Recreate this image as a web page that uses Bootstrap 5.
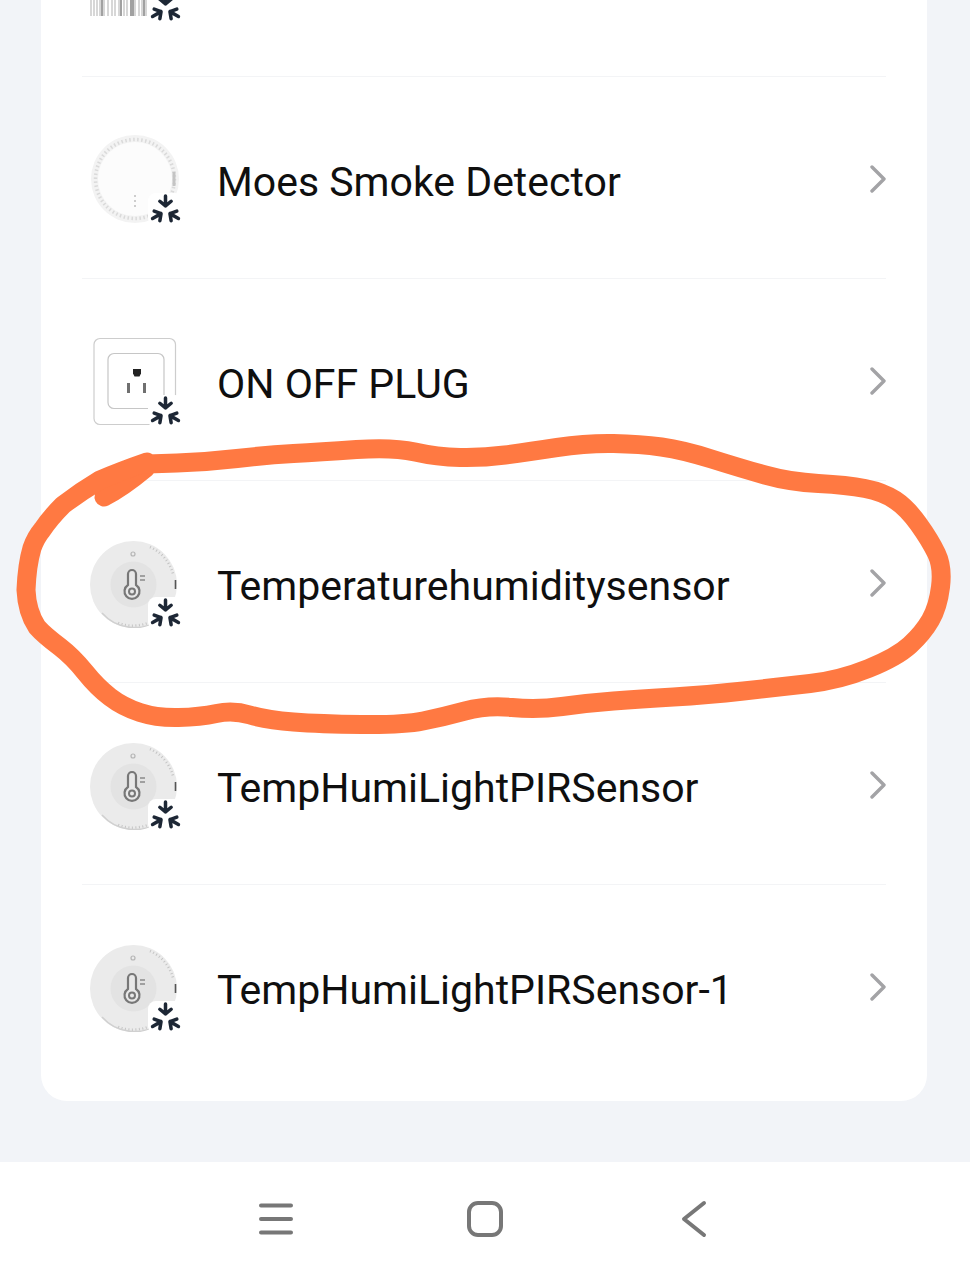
<!DOCTYPE html>
<html lang="en">
<head>
<meta charset="utf-8">
<title>Devices</title>
<link href="https://cdn.jsdelivr.net/npm/bootstrap@5.3.0/dist/css/bootstrap.min.css" rel="stylesheet">
<style>
html,body{height:100%;overflow:hidden}
body{background:#f2f4f8;font-family:Roboto,"Liberation Sans",sans-serif}
.screen{height:1280px;position:relative}
.panel{margin:0 43px 0 41px;height:1101px;border:0;border-radius:0 0 26px 26px;overflow:hidden;flex:none}
.rows{margin:-125px 41px 0}
.rows .list-group-item{height:202px;padding:57px 0 0;border-color:#f3f4f6;background:transparent}
.rows .list-group-item:last-child{height:216px}
.thumb-wrap{width:90px;height:90px;margin-left:8px;margin-right:37px;flex:none}
.thumb-wrap>svg{display:block;filter:blur(.35px)}
.tag{right:-3px;bottom:-2px;width:35px;height:33px;background:#fff;border-radius:8px}
.dev-name{font-size:41px;line-height:48px;color:#0f0f0f;margin-top:24px;white-space:nowrap}
.chev{margin-left:auto;margin-top:30px;flex:none}
.sysbar{height:118px;background:#fff;gap:169px;padding-bottom:4px}
.ink{position:absolute;left:0;top:0;pointer-events:none}
</style>
</head>
<body>
<svg width="0" height="0" class="position-absolute">
  <defs>
    <g id="arm" fill="none" stroke="#1d2735" stroke-width="3.400" stroke-linecap="round" stroke-linejoin="round">
      <path d="M17 3v9.500M11.500 8 17 12.500 22.500 8"/>
    </g>
    <symbol id="matter" viewBox="0 0 34 32">
      <use href="#arm"/>
      <use href="#arm" transform="rotate(120 17 17.500)"/>
      <use href="#arm" transform="rotate(240 17 17.500)"/>
    </symbol>
    <symbol id="chevron" viewBox="0 0 18 30">
      <path d="M4 3 16 15 4 27" fill="none" stroke="#a3a3a6" stroke-width="3.400" stroke-linecap="round" stroke-linejoin="round"/>
    </symbol>
    <symbol id="thermo" viewBox="0 0 90 90">
      <circle cx="43.500" cy="46.500" r="43.500" fill="#ebebeb"/>
      <path d="M60 9A41 41 0 0 1 83 36M78 68A41 41 0 0 1 26 84" fill="none" stroke="#c4c4c4" stroke-width="2.500" stroke-dasharray="1 2.500"/>
      <path d="M12 75A43 43 0 0 0 70 81" fill="none" stroke="#d0d0d0" stroke-width="1.500"/>
      <circle cx="43.500" cy="46.500" r="23" fill="#e3e3e3"/>
      <circle cx="43" cy="16" r="2" fill="none" stroke="#b5b5b5" stroke-width="1.200"/>
      <path d="M85.500 42v9" stroke="#555" stroke-width="1.600"/>
      <path d="M38 36a4 4 0 0 1 8 0v11a7.500 7.500 0 1 1-8 0z" fill="#e8e8e8" stroke="#777" stroke-width="2.200"/>
      <circle cx="42" cy="53.500" r="3" fill="none" stroke="#777" stroke-width="2"/>
      <path d="M50 38h5M50 42h5" stroke="#8a8a8a" stroke-width="1.600"/>
    </symbol>
  </defs>
</svg>

<div class="screen d-flex flex-column">
  <div class="card panel">
    <div class="list-group list-group-flush rows">
      <div class="list-group-item d-flex align-items-start">
        <div class="thumb-wrap position-relative">
          <svg width="90" height="90" viewBox="0 0 90 90">
            <path d="M1 60v24M4 60v24M7 60v24M10 60v24M14 60v24M18 60v24M22 60v24M25 60v24M29 60v24M34 60v24M37 60v24M45 60v24M49 60v24M52 60v24M56 60v24" stroke="#c2c2c2" stroke-width="1.300"/>
            <path d="M12 60v24M31 60v24M41 60v24M43 60v24M54 60v24" stroke="#8a8a8a" stroke-width="1.600"/>
          </svg>
          <div class="tag position-absolute"><svg width="35" height="33"><use href="#matter"/></svg></div>
        </div>
        <span class="dev-name">&nbsp;</span>
      </div>

      <div class="list-group-item d-flex align-items-start">
        <div class="thumb-wrap position-relative">
          <svg width="90" height="90" viewBox="0 0 90 90">
            <circle cx="45" cy="45" r="44" fill="#f3f3f3"/>
            <circle cx="45" cy="45" r="39.500" fill="none" stroke="#dadada" stroke-width="3.500" stroke-dasharray="1.500 2.500"/>
            <path d="M84 38v14" stroke="#c4c4c4" stroke-width="3"/>
            <circle cx="45" cy="45" r="37" fill="#fcfcfc"/>
            <path d="M44 62h2M44 67h2M44 72h2" stroke="#bdbdbd" stroke-width="1.500"/>
          </svg>
          <div class="tag position-absolute"><svg width="35" height="33"><use href="#matter"/></svg></div>
        </div>
        <span class="dev-name">Moes Smoke Detector</span>
        <svg class="chev" width="18" height="30"><use href="#chevron"/></svg>
      </div>

      <div class="list-group-item d-flex align-items-start">
        <div class="thumb-wrap position-relative">
          <svg width="90" height="90" viewBox="0 0 90 90">
            <rect x="4" y="2.500" width="81.500" height="86" rx="6" fill="#fff" stroke="#cdcdcd" stroke-width="1.200"/>
            <rect x="18" y="17.500" width="56" height="55" rx="6" fill="#fff" stroke="#c6c6c6" stroke-width="1.200"/>
            <path d="M43 33h8v4.500l-1.500 3h-5l-1.500-3z" fill="#222"/>
            <rect x="37" y="47" width="3" height="10" fill="#707070"/>
            <rect x="53" y="47" width="3" height="10" fill="#707070"/>
          </svg>
          <div class="tag position-absolute"><svg width="35" height="33"><use href="#matter"/></svg></div>
        </div>
        <span class="dev-name">ON OFF PLUG</span>
        <svg class="chev" width="18" height="30"><use href="#chevron"/></svg>
      </div>

      <div class="list-group-item d-flex align-items-start">
        <div class="thumb-wrap position-relative">
          <svg width="90" height="90"><use href="#thermo"/></svg>
          <div class="tag position-absolute"><svg width="35" height="33"><use href="#matter"/></svg></div>
        </div>
        <span class="dev-name">Temperaturehumiditysensor</span>
        <svg class="chev" width="18" height="30"><use href="#chevron"/></svg>
      </div>

      <div class="list-group-item d-flex align-items-start">
        <div class="thumb-wrap position-relative">
          <svg width="90" height="90"><use href="#thermo"/></svg>
          <div class="tag position-absolute"><svg width="35" height="33"><use href="#matter"/></svg></div>
        </div>
        <span class="dev-name">TempHumiLightPIRSensor</span>
        <svg class="chev" width="18" height="30"><use href="#chevron"/></svg>
      </div>

      <div class="list-group-item d-flex align-items-start">
        <div class="thumb-wrap position-relative">
          <svg width="90" height="90"><use href="#thermo"/></svg>
          <div class="tag position-absolute"><svg width="35" height="33"><use href="#matter"/></svg></div>
        </div>
        <span class="dev-name">TempHumiLightPIRSensor-1</span>
        <svg class="chev" width="18" height="30"><use href="#chevron"/></svg>
      </div>
    </div>
  </div>

  <div class="sysbar mt-auto d-flex align-items-center justify-content-center">
    <svg width="40" height="40" viewBox="0 0 40 40"><path d="M5 6.500h30M5 20h30M5 33.500h30" stroke="#777" stroke-width="4" stroke-linecap="round"/></svg>
    <svg width="40" height="40" viewBox="0 0 40 40"><rect x="4" y="4" width="32" height="32" rx="9" fill="none" stroke="#777" stroke-width="4"/></svg>
    <svg width="40" height="40" viewBox="0 0 40 40"><path d="M30 4 10 20l20 16" fill="none" stroke="#777" stroke-width="4" stroke-linecap="round" stroke-linejoin="round"/></svg>
  </div>

  <svg class="ink" width="970" height="1280" viewBox="0 0 970 1280">
    <g fill="none" stroke="#ff7942" stroke-linecap="round" stroke-linejoin="round">
      <path stroke-width="19" d="M104 497Q122 488 146 468"/>
      <path stroke-width="19" d="M147 464L177 463Q207 462 237 458.500Q267 455 293.500 453.500Q320 452 356.500 449.500Q393 447 415 452Q437 457 460 457.500Q483 458 505 455Q527 452 557 447.500Q587 443 613.500 443.500Q640 444 661.500 447Q683 450 711.500 459Q740 468 765 475Q790 482 818.500 483.500Q847 485 865 488.500Q883 492 895 500Q907 508 918.500 524Q930 540 936.500 553.500Q943 567 940.500 587Q938 607 930.500 620Q923 633 910 645Q897 657 868.500 668.500Q840 680 810 683.500Q780 687 743.500 691Q707 695 673.500 697Q640 699 613.500 701Q587 703 562 706.500Q537 710 512 707.500Q487 705 465 711Q443 717 423 721Q403 725 361.500 724.500Q320 724 293.500 722Q267 720 250 715Q233 710 216.500 713.500Q200 717 178.500 717.500Q157 718 140 712.500Q123 707 110 697Q97 687 85 672Q73 657 60 647Q44 635 37 627Q27 612 26 590Q27 565 32 548Q36 537 42 530Q50 518 63 505Q80 492 100 480Q121 471 147 462"/>
    </g>
  </svg>
</div>
<script src="https://cdn.jsdelivr.net/npm/bootstrap@5.3.0/dist/js/bootstrap.bundle.min.js"></script>
</body>
</html>
